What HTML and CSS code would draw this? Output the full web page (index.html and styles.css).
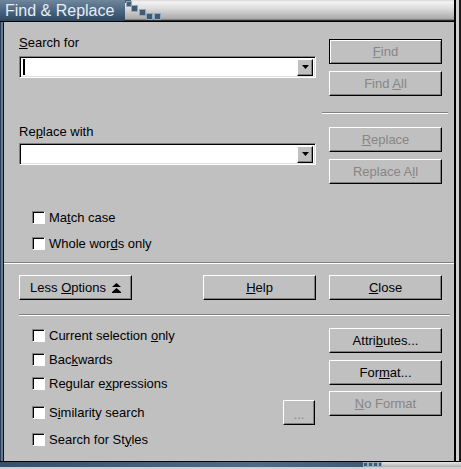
FILE: index.html
```html
<!DOCTYPE html>
<html lang="en">
<head>
    <meta charset="UTF-8">
    <meta name="viewport" content="width=device-width, initial-scale=1.0">
    <title>Find &amp; Replace</title>
    <link rel="stylesheet" href="styles.css">
</head>
<body>
    <div class="window">
        <div class="titlebar">
            <div class="title-tab">Find &amp; Replace</div>
            <svg class="title-steps" width="38" height="21" viewBox="0 0 38 21">
                <rect x="0" y="0" width="6" height="3" fill="#46607a"/>
                <rect x="1.5" y="1.5" width="5" height="5" fill="#46607a" stroke="#93a7ba" stroke-width="1"/>
                <rect x="6.5" y="5.5" width="6" height="6" fill="#3f5a74" stroke="#93a7ba" stroke-width="1"/>
                <rect x="14.5" y="9.5" width="6" height="6" fill="#3f5a74" stroke="#93a7ba" stroke-width="1"/>
                <rect x="21.5" y="13.5" width="6" height="6" fill="#3f5a74" stroke="#93a7ba" stroke-width="1"/>
                <rect x="29.5" y="13.5" width="6" height="6" fill="#3f5a74" stroke="#93a7ba" stroke-width="1"/>
            </svg>
            <div class="title-fill"></div>
            <div class="edge-right"></div>
        </div>

        <div class="frame">
            <div class="edge-left"></div>
            <div class="content">
                <div class="top-section">
                    <div class="field-col">
                        <div class="field-label"><u>S</u>earch for</div>
                        <div class="combo">
                            <span class="caret"></span>
                            <span class="combo-btn"><svg width="7" height="4" viewBox="0 0 7 4"><polygon points="0,0 7,0 3.5,4" fill="#000"/></svg></span>
                        </div>
                        <div class="field-label label-replace">Re<u>p</u>lace with</div>
                        <div class="combo">
                            <span class="combo-btn"><svg width="7" height="4" viewBox="0 0 7 4"><polygon points="0,0 7,0 3.5,4" fill="#000"/></svg></span>
                        </div>
                        <label class="check check-first"><span class="box"></span><span>Ma<u>t</u>ch case</span></label>
                        <label class="check check-second"><span class="box"></span><span>Whole wor<u>d</u>s only</span></label>
                    </div>
                    <div class="button-col">
                        <button class="btn btn-default disabled"><span><u>F</u>ind</span></button>
                        <button class="btn disabled btn-gap"><span>Find <u>A</u>ll</span></button>
                        <div class="sep sep-side"></div>
                        <button class="btn disabled btn-replace"><span><u>R</u>eplace</span></button>
                        <button class="btn disabled btn-gap"><span>Replace A<u>l</u>l</span></button>
                    </div>
                </div>

                <div class="sep sep-full"></div>

                <div class="action-row">
                    <button class="btn btn-less"><span>Less <u>O</u>ptions</span>
                        <svg class="arrows" width="9" height="10" viewBox="0 0 9 10">
                            <polygon points="4.5,0 9,4 0,4" fill="#000"/>
                            <polygon points="4.5,5 9,9 0,9" fill="#000"/>
                            <rect x="0" y="9" width="9" height="1" fill="#000"/>
                        </svg>
                    </button>
                    <button class="btn btn-help"><span><u>H</u>elp</span></button>
                    <button class="btn btn-close"><span><u>C</u>lose</span></button>
                </div>

                <div class="sep sep-lower"></div>

                <div class="more-section">
                    <div class="more-col">
                        <label class="row"><span class="box"></span><span>Current selection <u>o</u>nly</span></label>
                        <label class="row"><span class="box"></span><span>Bac<u>k</u>wards</span></label>
                        <label class="row"><span class="box"></span><span>Regular e<u>x</u>pressions</span></label>
                        <div class="row row-similar">
                            <label class="row-inner"><span class="box"></span><span>S<u>i</u>milarity search</span></label>
                            <button class="btn btn-dots disabled"><span>...</span></button>
                        </div>
                        <label class="row row-styles"><span class="box"></span><span>Search for St<u>y</u>les</span></label>
                    </div>
                    <div class="button-col">
                        <button class="btn btn-attr"><span>Attri<u>b</u>utes...</span></button>
                        <button class="btn btn-gap"><span>For<u>m</u>at...</span></button>
                        <button class="btn disabled btn-gap6"><span><u>N</u>o Format</span></button>
                    </div>
                </div>
            </div>
            <div class="edge-right"></div>
        </div>

        <div class="bottom-frame">
            <div class="bottom-slate"></div>
            <svg class="bottom-steps" width="19" height="5" viewBox="0 0 19 5">
                <rect x="0.5" y="0.5" width="4" height="4" fill="#3f5a74" stroke="#93a7ba"/>
                <rect x="5.5" y="0.5" width="4" height="4" fill="#3f5a74" stroke="#93a7ba"/>
                <rect x="10.5" y="0.5" width="4" height="4" fill="#3f5a74" stroke="#93a7ba"/>
                <rect x="15.5" y="0.5" width="3" height="4" fill="#3f5a74" stroke="#93a7ba"/>
            </svg>
            <div class="bottom-grey"></div>
        </div>
    </div>
</body>
</html>
```

FILE: styles.css
```css
body {
    margin: 0;
    background-color: #d0d0d0;
    font-family: "Liberation Sans", Arial, sans-serif;
    font-size: 13px;
    color: #000;
}
.window {
    width: 461px;
    height: 469px;
    display: flex;
    flex-direction: column;
}
.titlebar {
    height: 22px;
    display: flex;
    background: linear-gradient(#d8d8d8 0, #f2f2f2 2px, #dedede 8px, #a9a9a9 19px, #5a5a5a 20px, #000 21px);
}
.title-tab {
    width: 120px;
    padding-left: 5px;
    height: 22px;
    line-height: 21px;
    font-size: 16px;
    color: #e6edf3;
    background: linear-gradient(#6f869c, #4a6580 50%, #2f4862 95%, #000 21px);
}
.title-steps {
    display: block;
}
.title-fill {
    flex: 1;
}
.frame {
    flex: 1;
    display: flex;
}
.edge-left {
    width: 4px;
    background: linear-gradient(to right, #2c3e52 0, #2c3e52 1px, #5f7a93 1px, #5f7a93 3px, #111 3px);
}
.edge-right {
    width: 7px;
    background: linear-gradient(to right, #000 0, #000 2px, #d2d2d2 2px, #d2d2d2 5px, #1a1a1a 5px);
}
.content {
    width: 450px;
    background-color: #c0c0c0;
}
.top-section {
    height: 240px;
    display: flex;
    padding-left: 15px;
}
.field-col {
    width: 297px;
    display: flex;
    flex-direction: column;
}
.field-label {
    margin-top: 13px;
    height: 15px;
    line-height: 15px;
}
.label-replace {
    margin-top: 46px;
}
.combo {
    margin-top: 6px;
    height: 22px;
    box-sizing: border-box;
    background-color: #fff;
    border: 1px solid;
    border-color: #808080 #fff #fff #808080;
    box-shadow: inset 1px 1px #000, inset -1px -1px #dfdfdf;
    display: flex;
    align-items: center;
    justify-content: space-between;
    padding: 0 2px 0 3px;
}
.label-replace + .combo {
    margin-top: 4px;
}
.caret {
    width: 2px;
    height: 16px;
    background-color: #000;
}
.combo-btn {
    margin-left: auto;
    width: 16px;
    height: 17px;
    box-sizing: border-box;
    background-color: #c0c0c0;
    border: 1px solid;
    border-color: #fff #000 #000 #fff;
    box-shadow: inset -1px -1px #808080;
    display: flex;
    align-items: center;
    justify-content: center;
}
.combo-btn svg {
    display: block;
}
.check, .row, .row-inner {
    display: flex;
    align-items: center;
}
.check {
    margin-left: 13px;
    height: 13px;
}
.check-first {
    margin-top: 46px;
}
.check-second {
    margin-top: 13px;
}
.box {
    width: 13px;
    height: 13px;
    box-sizing: border-box;
    background-color: #fff;
    border: 1px solid;
    border-color: #808080 #fff #fff #808080;
    box-shadow: inset 1px 1px #000;
    margin-right: 4px;
    flex-shrink: 0;
}
.button-col {
    width: 126px;
    margin-left: 6px;
    display: flex;
    flex-direction: column;
    align-items: flex-start;
}
.btn {
    width: 113px;
    height: 25px;
    margin: 0;
    padding: 0;
    box-sizing: border-box;
    background-color: #c0c0c0;
    border: 1px solid;
    border-color: #fff #000 #000 #fff;
    box-shadow: inset -1px -1px #808080;
    font-family: "Liberation Sans", Arial, sans-serif;
    font-size: 13px;
    color: #000;
    display: flex;
    align-items: center;
    justify-content: center;
}
.button-col .btn {
    margin-left: 7px;
}
.btn-default {
    margin-top: 17px;
    border-color: #000;
    box-shadow: inset 1px 1px #fff, inset -1px -1px #808080;
}
.button-col .btn-gap {
    margin-top: 7px;
}
.button-col .btn-gap6 {
    margin-top: 6px;
}
.disabled {
    color: #868686;
}
.sep {
    height: 1px;
    background-color: #808080;
    border-bottom: 1px solid #fff;
}
.sep-side {
    width: 126px;
    margin-top: 16px;
}
.button-col .btn-replace {
    margin-top: 13px;
}
.sep-full {
    width: 450px;
    margin-top: 0;
}
.action-row {
    display: flex;
    padding-left: 15px;
    margin-top: 11px;
}
.btn-less .arrows {
    margin-left: 6px;
}
.btn-help {
    margin-left: 71px;
}
.btn-close {
    margin-left: 13px;
}
.sep-lower {
    width: 431px;
    margin: 14px 0 0 15px;
}
.more-section {
    display: flex;
    padding-left: 15px;
}
.more-col {
    width: 297px;
    display: flex;
    flex-direction: column;
    padding-top: 7px;
}
.row {
    height: 24px;
    padding-left: 13px;
}
.row-similar {
    height: 25px;
    margin-top: 5px;
    justify-content: space-between;
    padding-left: 13px;
    padding-right: 1px;
}
.row-inner {
    height: 25px;
}
.row-styles {
    margin-top: 2px;
}
.btn-dots {
    width: 32px;
    padding-top: 4px;
}
.button-col .btn-attr {
    margin-top: 12px;
}
.bottom-frame {
    height: 8px;
    display: flex;
    align-items: flex-start;
    box-sizing: border-box;
    border-top: 1px solid #000;
    border-bottom: 2px solid #cfcfcf;
}
.bottom-slate {
    width: 363px;
    height: 5px;
    background: linear-gradient(to right, #34506b, #4f6a84 70%, #3f5a74);
}
.bottom-steps {
    display: block;
}
.bottom-grey {
    flex: 1;
    height: 5px;
    background: linear-gradient(#e6e6e6, #b0b0b0);
}
```
